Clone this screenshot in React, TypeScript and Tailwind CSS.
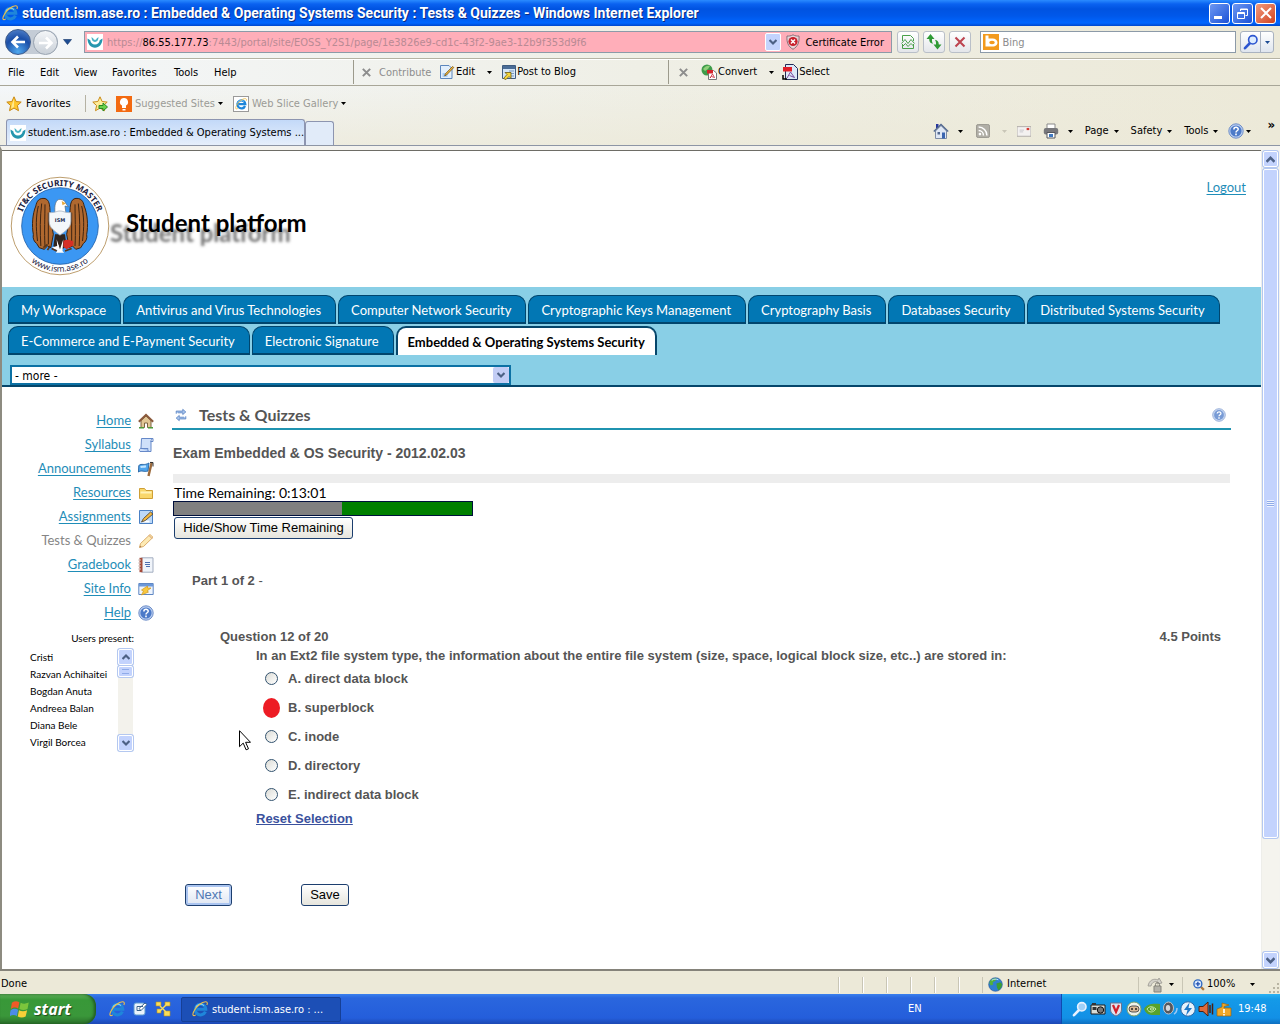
import React from "react";

type IconProps = { className?: string };

const ui = "font-['DejaVu_Sans_Condensed','Noto_Sans',sans-serif]";
const treb = "font-['Lato','Open_Sans',sans-serif]";

function Icon({ className = "size-4", children }: { className?: string; children: React.ReactNode }) {
  return (
    <svg viewBox="0 0 16 16" className={"shrink-0 " + className} fill="none" aria-hidden="true">
      {children}
    </svg>
  );
}

function Caret({ className = "text-black" }: IconProps) {
  return (
    <svg viewBox="0 0 5 3" className={"h-[3px] w-[5px] shrink-0 " + className} aria-hidden="true">
      <path d="M0 0h5L2.500 3z" fill="currentColor" />
    </svg>
  );
}

function Chevron({ up = false, className = "size-2" }: { up?: boolean; className?: string }) {
  return (
    <svg viewBox="0 0 8 8" className={className} fill="none" stroke="#4d6185" strokeWidth="2.200" aria-hidden="true">
      <path d={up ? "M0.500 6L4 2.500 7.500 6" : "M0.500 2L4 5.500 7.500 2"} />
    </svg>
  );
}

function IeLogo({ className }: IconProps) {
  return (
    <Icon className={className}>
      <path d="M13.400 10.600A5.300 5.300 0 1 1 13.800 8.300H5" stroke="#1f86da" strokeWidth="3" />
      <path d="M3.600 6.500A5.300 5.300 0 0 1 12 4.600" stroke="#86cff8" strokeWidth="1.100" />
      <path d="M3.800 13.900C1.300 15.800-.2 14 2 10 4.500 5.200 10 .6 13.800.8c2 .2 1.700 2 1 3.200" stroke="#f0c048" strokeWidth="1.100" />
    </Icon>
  );
}

function SiteMark({ className }: IconProps) {
  return (
    <Icon className={className}>
      <path d="M0 0h16v16H0z" fill="#fff" />
      <path d="M.5 4.500c0 5.500 3.200 9.200 7.500 9.200s7.500-3.700 7.500-9.200l-2.800 1.700C12.500 8.800 10.700 10.500 8 10.500S3.500 8.800 3.300 6.200z" fill="#2496ae" />
      <path d="M4.500 3c0 3.200 1.300 4.900 3.500 4.900s3.500-1.700 3.500-4.900L9.700 4.500 9 5.700H7L6.300 4.500z" fill="#48b3c4" />
    </Icon>
  );
}

function Star({ add = false }: { add?: boolean }) {
  return (
    <Icon>
      <path d="M8 .8l2.100 4.700 5.100.6-3.800 3.400 1.100 5.200L8 12.100l-4.500 2.600 1.100-5.200L.8 6.100l5.100-.6z" fill={add ? "#fff0a0" : "#ffc72e"} stroke="#c98a17" />
      <path d="M8 2.800v8.200l-3 1.700.8-3.600z" fill="#ffe88c" />
      {add && <path d="M7 9.500h4V7l4.500 4-4.500 4v-2.500H7z" fill="#6bd14b" stroke="#2b8a22" />}
    </Icon>
  );
}

function HelpMark({ className }: IconProps) {
  return (
    <Icon className={className}>
      <circle cx="8" cy="8" r="7.200" fill="#b9cdf0" stroke="#6f8fc8" />
      <circle cx="8" cy="8" r="5.600" fill="#4c7ac8" />
      <path d="M5.900 6.400C5.900 3.700 10.200 3.700 10.200 6.200 10.200 7.800 8 7.700 8 9.500" stroke="#fff" strokeWidth="1.500" />
      <path d="M7.200 10.600h1.600v1.600H7.200z" fill="#fff" />
    </Icon>
  );
}

function DocEdit({ className }: IconProps) {
  return (
    <Icon className={className}>
      <path d="M1.500 1.500h8.500l3 3v10H1.500z" fill="#e2effc" stroke="#5c86bd" />
      <path d="M3.500 9h5v4h-5z" fill="#a8cdf2" />
      <path d="M14.800 3.500L7.500 11l-1.800.9.600-2L13.500 2.500z" fill="#f0b83a" stroke="#7a5415" strokeWidth=".8" />
    </Icon>
  );
}

function Magnifier({ stroke = "#2c5fc9", lens = "#dcecff" }: { stroke?: string; lens?: string }) {
  return (
    <Icon>
      <path d="M7 9L2 14.200" stroke={stroke} strokeWidth="2.600" strokeLinecap="round" />
      <circle cx="9.800" cy="5.800" r="4.200" fill={lens} stroke={stroke} strokeWidth="1.600" />
    </Icon>
  );
}

function Globe({ className }: IconProps) {
  return (
    <Icon className={className}>
      <circle cx="8" cy="8" r="7.300" fill="#2f7fd0" stroke="#1c4f94" strokeWidth=".6" />
      <path d="M2 4.500C4 2 7 1.200 9 1.500L8 4 5 5.500 5.500 8 3 9 1.500 7z" fill="#52b13c" />
      <path d="M9 7l4-1.500 2 2c0 3-2 5.500-4 6.500L9.500 11z" fill="#3c9e34" />
      <path d="M4 3.500C6 2 9 2 11 3" stroke="#c8ecff" />
    </Icon>
  );
}

function TitleBar() {
  return (
    <header className="flex h-[26px] items-center bg-[linear-gradient(180deg,#2a8bff_0,#0a62f0_4px,#0053e1_9px,#0058ea_16px,#0066ff_23px,#0047cc_26px)] pr-1 pl-[2px]">
      <IeLogo className="size-4" />
      <h1 className="ml-1 flex-1 truncate pt-[1px] font-['Roboto',sans-serif] text-[14px] font-bold text-white [text-shadow:1px_1px_0_#0a2a80]">
        student.ism.ase.ro : Embedded &amp; Operating Systems Security : Tests &amp; Quizzes - Windows Internet Explorer
      </h1>
      <div className="flex gap-[2px]">
        <button aria-label="Minimize" className="flex size-[21px] items-end justify-start rounded-[3px] border border-white bg-linear-to-br from-[#6d97f2] to-[#1a4fd6] p-1">
          <span className="h-[3px] w-2 bg-white" />
        </button>
        <button aria-label="Restore" className="flex size-[21px] items-center justify-center rounded-[3px] border border-white bg-linear-to-br from-[#6d97f2] to-[#1a4fd6]">
          <svg viewBox="0 0 11 11" className="size-[11px]" fill="none" stroke="#fff" aria-hidden="true">
            <path d="M3.500 3V1h7v6.500H8.500" /><path d="M3 1.500h8" /><path d="M.5 4.500h7v6h-7zM.5 5.500h7" />
          </svg>
        </button>
        <button aria-label="Close" className="flex size-[21px] items-center justify-center rounded-[3px] border border-white bg-linear-to-br from-[#f09a7c] to-[#d0401a]">
          <svg viewBox="0 0 12 12" className="size-3" stroke="#fff" strokeWidth="2" aria-hidden="true"><path d="M1 1l10 10M11 1L1 11" /></svg>
        </button>
      </div>
    </header>
  );
}

const toolBtn = "flex size-[22px] items-center justify-center rounded-[3px] border border-[#b9bfc8] bg-linear-to-b from-white to-[#e4e6ea]";

function AddressBar() {
  return (
    <div className="flex h-8 items-center pr-[6px] pl-[5px]">
      <div className="flex h-6 items-center rounded-full bg-[#c4ccd6]">
        <button aria-label="Back" className="size-[26px] rounded-full border border-[#3c5a8c] bg-[radial-gradient(circle_at_50%_90%,#4fa8ee,#1c4fa8_55%,#5b8ad0)] p-1">
          <svg viewBox="0 0 16 16" className="size-4" fill="none" stroke="#fff" strokeWidth="2.600" aria-hidden="true"><path d="M15 8H3M8 2.500L2.500 8 8 13.500" /></svg>
        </button>
        <button aria-label="Forward" className="ml-[2px] size-[25px] rounded-full border border-[#98a3b0] bg-linear-to-b from-[#f4f6f8] to-[#c9d0d8] p-1">
          <svg viewBox="0 0 16 16" className="size-4" fill="none" stroke="#fff" strokeWidth="2.600" aria-hidden="true"><path d="M1 8h12M8 2.500L13.500 8 8 13.500" /></svg>
        </button>
      </div>
      <button aria-label="Recent pages" className="ml-[5px]">
        <svg viewBox="0 0 9 6" className="h-[6px] w-[9px]" aria-hidden="true"><path d="M.5.5h8L4.500 5.500z" fill="#1d4c93" stroke="#123468" strokeWidth=".6" /></svg>
      </button>
      <div className="ml-3 flex h-[22px] flex-[812] items-center border border-[#8c9aa8] bg-[#ffaeb9] pl-[2px]">
        <SiteMark className="size-4" />
        <p className={ui + " ml-1 flex-1 truncate pt-[2px] text-[11px] text-[#b98a94]"}>
          https://<span className="text-black">86.55.177.73</span>:7443/portal/site/EOSS_Y2S1/page/1e3826e9-cd1c-43f2-9ae3-12b9f353d9f6
        </p>
        <button aria-label="Show addresses" className="flex h-[18px] w-4 items-center justify-center rounded-[2px] border border-white bg-[#c3d3fd]"><Chevron /></button>
        <button className={ui + " ml-1 flex w-[106px] items-center gap-1 text-[11px] text-black"}>
          <Icon>
            <path d="M8 .8C10 2 12.500 2.200 14 2c.5 6-1 10.500-6 13.300C3 12.500 1.500 8 2 2c1.500.2 4 0 6-1.200z" fill="#e8d4d8" stroke="#8a7078" />
            <circle cx="8" cy="7.500" r="4.600" fill="#c8202c" /><path d="M6 5.500l4 4M10 5.500l-4 4" stroke="#fff" strokeWidth="1.500" />
          </Icon>
          <span className="pt-[2px] whitespace-nowrap">Certificate Error</span>
        </button>
      </div>
      <div className="mx-[5px] flex gap-1">
        <button aria-label="Compatibility View" className={toolBtn}>
          <Icon><path d="M2.500 7V1.500h8l3 3V7M2.500 10v4.500h11V10" stroke="#4aa04a" /><path d="M1.500 9.500L5 5.500l3 4 3-4 3.500 4M3 12l2.500-2.500 2.500 3 3-3 2.500 2.500" stroke="#4aa04a" /></Icon>
        </button>
        <button aria-label="Refresh" className={toolBtn}>
          <Icon><path d="M4.500 0L.5 5h2.700c0 3 1.300 4.500 4 4.800C6 8.500 5.900 7 6 5h2.500zM11.500 15.500l4-5h-2.700c0-3-1.300-4.500-4-4.800 1.200 1.300 1.300 2.800 1.200 4.800H7.500z" fill="#2f9a35" /></Icon>
        </button>
        <button aria-label="Stop" className={toolBtn}>
          <Icon className="size-3"><path d="M2 2l12 12M14 2L2 14" stroke="#bd4450" strokeWidth="2.800" /></Icon>
        </button>
      </div>
      <form className="ml-1 flex h-[22px] flex-[254] items-center border border-[#8c9aa8] bg-white pl-[2px]">
        <Icon className="size-4"><path d="M0 0h16v16H0z" fill="#f39a1d" /><path d="M2.500 1.500v11h7c3.500 0 5-2 5-4s-2-4-5-4H5.500v-3z" fill="#fff" /><ellipse cx="9" cy="8.500" rx="2.800" ry="1.800" fill="#f39a1d" /></Icon>
        <input aria-label="Search" placeholder="Bing" className={ui + " ml-[3px] min-w-0 flex-1 bg-transparent pt-[2px] text-[11px] outline-none placeholder:text-[#8c8c8c]"} />
      </form>
      <div className="ml-1 flex h-[22px] rounded-[3px] border border-[#a9b2c0] bg-linear-to-b from-white to-[#dfe5ee]">
        <button aria-label="Search" className="flex w-5 items-center justify-center border-r border-[#a9b2c0]"><Magnifier stroke="#2c55d0" /></button>
        <button aria-label="Search options" className="flex w-3 items-center justify-center"><Caret className="text-[#1d4c93]" /></button>
      </div>
    </div>
  );
}

function MenuBar() {
  const grayX = <Icon className="size-[9px]"><path d="M1.500 1.500l13 13M14.500 1.500l-13 13" stroke="#8d8d8d" strokeWidth="3.600" /></Icon>;
  return (
    <div className={ui + " flex h-7 items-center border-y border-t-[#b5b2a3] border-b-[#a8a698] text-[11px] text-black shadow-[inset_0_1px_0_#fff]"}>
      <nav aria-label="Menu" className="flex w-[353px] items-center pt-[3px] pl-2">
        <button className="w-8 text-left">File</button>
        <button className="w-[34px] text-left">Edit</button>
        <button className="w-[38px] text-left">View</button>
        <button className="w-[62px] text-left">Favorites</button>
        <button className="w-10 text-left">Tools</button>
        <button>Help</button>
      </nav>
      <div className="flex h-6 w-[315px] items-center border-l border-[#9c9a8c] pl-2">
        {grayX}
        <span className="ml-2 w-[60px] pt-[2px] text-[#8d8d8d]">Contribute</span>
        <button className="flex items-center gap-[1px]"><DocEdit className="size-4" /><span className="pt-[1px]">Edit</span></button>
        <span className="w-3" /><Caret /><span className="w-[9px]" />
        <button className="flex items-center">
          <Icon><path d="M1.500 1.500h13v13h-13z" fill="#d4e6f8" stroke="#3f5c80" /><path d="M2 2h12v3H2z" fill="#4a6c96" /><path d="M8 7h5M8 9.500h5M9 12h4" stroke="#7b9bc0" /><path d="M2.500 14.500l3.500-4-2-2h6v6l-2-2-3 3z" fill="#f5d63a" stroke="#6c5a10" strokeWidth=".8" /></Icon>
          <span className="pt-[1px]">Post to Blog</span>
        </button>
      </div>
      <div className="flex h-6 items-center border-l border-[#9c9a8c] pl-[10px]">
        {grayX}
        <button className="ml-[13px] flex items-center gap-[1px]">
          <Icon><circle cx="6" cy="6" r="5.500" fill="#3f9b4a" /><path d="M2 5c2-3 5-4 7-3L7 5 4 7z" fill="#8fd07a" /><path d="M7.500 6.500h5l3 2.500v6.500h-8z" fill="#fff" stroke="#777" /><path d="M6 6h6v3.500H6z" fill="#d4232a" /><path d="M9 14l2.500-4 2 3.500-3-1z" stroke="#c23" strokeWidth=".8" /></Icon>
          <span className="pt-[1px]">Convert</span>
        </button>
        <span className="w-[12px]" /><Caret /><span className="w-2" />
        <button className="flex items-center gap-[1px]">
          <Icon><path d="M3.500.5h8l4 4v11h-12z" fill="#dce8f8" stroke="#222c58" /><path d="M1 3h9v4.500H1z" fill="#e0202a" /><path d="M5 14l3.500-6 4 5.500-5-2" stroke="#7a4a9c" /><path d="M1 11v4h4" stroke="#000" strokeWidth="1.500" /></Icon>
          <span className="pt-[1px]">Select</span>
        </button>
      </div>
    </div>
  );
}

function FavoritesBar() {
  return (
    <div className={ui + " flex h-[31px] items-center pt-1 pl-[6px] text-[11px]"}>
      <button className="flex w-[79px] items-center gap-1 text-black"><Star /><span className="pt-[1px]">Favorites</span></button>
      <div className="flex items-center border-l border-[#b5b2a3] pl-[6px] text-[#9b9b96]">
        <button aria-label="Add to favorites"><Star add /></button>
        <button className="ml-2 flex items-center gap-[3px]">
          <Icon className="size-4"><path d="M0 0h16v16H0z" fill="#f36a11" /><path d="M8 2a4 4 0 0 0-2 7.500V12h4V9.500A4 4 0 0 0 8 2zM6.500 13h3v1.500h-3z" fill="#fff" /></Icon>
          <span className="pt-[1px]">Suggested Sites</span> <Caret />
        </button>
        <button className="ml-[10px] flex items-center gap-[3px]">
          <span className="flex size-4 items-center justify-center border border-[#9a9a9a] bg-white"><IeLogo className="size-3" /></span>
          <span className="pt-[1px]">Web Slice Gallery</span> <Caret />
        </button>
      </div>
    </div>
  );
}

function TabRow() {
  return (
    <div className="flex h-[29px] items-end border-b border-[#8d95a5] pl-[6px]">
      <div className="flex h-[26px] w-[299px] items-center rounded-t-[3px] border border-b-0 border-[#8d95b0] bg-linear-to-b from-[#c3d9f8] to-[#e6effb] pl-[3px]">
        <SiteMark className="size-4" />
        <span className={ui + " ml-[2px] pt-[2px] text-[11px] whitespace-nowrap text-black"}>student.ism.ase.ro : Embedded &amp; Operating Systems ...</span>
      </div>
      <button aria-label="New tab" className="h-6 w-[29px] rounded-t-[3px] border border-b-0 border-[#8d95b0] bg-[#e1ebf9]" />
      <div className={ui + " flex flex-1 items-center justify-end self-stretch pr-[5px] text-[11px] text-black"}>
        <button aria-label="Home" className="flex items-center gap-[9px]">
          <Icon><path d="M3 1h2.500v4H3z" fill="#27379c" /><path d="M2.500 8v7.500h11V8L8 2.500z" fill="#dfe7f5" stroke="#7d8ba5" /><path d="M.8 8.500L8 1.500l7.200 7" stroke="#52688f" strokeWidth="1.300" /><path d="M9 9.500h3v6H9z" fill="#3a64b0" /><path d="M4.500 9h2.500v2.500H4.500z" fill="#52688f" /></Icon>
          <Caret />
        </button>
        <button aria-label="Feeds" className="ml-[13px] flex items-center gap-3">
          <Icon className="size-[14px]"><rect x=".5" y=".5" width="15" height="15" rx="2" fill="#b0aea6" stroke="#93918a" /><circle cx="4.500" cy="11.500" r="1.500" fill="#fff" /><path d="M3 7.500a5.500 5.500 0 0 1 5.500 5.500M3 3.500A9.500 9.500 0 0 1 12.500 13" stroke="#fff" strokeWidth="1.700" /></Icon>
          <Caret className="text-[#c9c6b8]" />
        </button>
        <button aria-label="Read mail" className="ml-[10px]">
          <Icon className="h-4 w-[14px]"><path d="M0 3h16v11H0z" fill="#f3f1f0" stroke="#aaa6a2" /><path d="M3 7h5M3 9h4" stroke="#c5c5cc" /><path d="M11 4.500h3v2.500h-3z" fill="#d63a32" /></Icon>
        </button>
        <button aria-label="Print" className="ml-3 flex items-center gap-[9px]">
          <Icon><path d="M4 1h8v5H4z" fill="#fff" stroke="#8a8a8a" /><rect x=".8" y="5" width="14.400" height="6.500" rx="2" fill="#77777b" /><path d="M4 9.500h8v5.500H4z" fill="#fff" stroke="#55565c" /><path d="M6 11h4v3H6z" fill="#3f78c0" /></Icon>
          <Caret />
        </button>
        <button className="ml-3 flex items-center gap-[5px]">Page <Caret /></button>
        <button className="ml-3 flex items-center gap-[5px]">Safety <Caret /></button>
        <button className="ml-3 flex items-center gap-[5px]">Tools <Caret /></button>
        <button aria-label="Help" className="ml-[10px] flex items-center gap-[2px]"><HelpMark /><Caret /></button>
        <button aria-label="More commands" className="mb-[14px] ml-4 text-[13px] leading-none font-bold">»</button>
      </div>
    </div>
  );
}

function SchoolSeal() {
  const wing =
    "M49 54C47 44 50 29 42 27c-7-1-10 3-11 9-4 9-5 24-3 34-1 5 1 9 4 11l3 5 6 2 4-4 4 2 3-16z";
  return (
    <svg viewBox="0 0 120 120" className="size-[100px] shrink-0" role="img" aria-label="IT&C Security Master seal">
      <defs>
        <path id="sealTop" d="M12 60a48 48 0 0 1 96 0" />
        <path id="sealBottom" d="M5 60a55 55 0 0 0 110 0" />
      </defs>
      <circle cx="60" cy="60" r="58.500" fill="#fff" stroke="#b08a50" />
      <circle cx="60" cy="60" r="46" fill="#3b97f3" stroke="#1f5fa8" />
      <text className="font-['Noto_Sans',sans-serif] text-[10px] font-bold" fill="#1a2040" textAnchor="middle">
        <textPath href="#sealTop" startOffset="50%">IT&amp;C SECURITY MASTER</textPath>
      </text>
      <text className="font-['Noto_Sans',sans-serif] text-[10px]" fill="#1a2040" textAnchor="middle">
        <textPath href="#sealBottom" startOffset="50%">www.ism.ase.ro</textPath>
      </text>
      <g fill="#b0682f" stroke="#3d2412" strokeWidth="1.200">
        <path d={wing} />
        <path d={wing} transform="translate(120 0) scale(-1 1)" />
      </g>
      <g stroke="#3d2412" strokeWidth="1.200" fill="none">
        <path d="M34 36c-3 12-3 26-1 42M38 33c-2 16-2 34-1 51M42 34c0 14-1 34 0 50M46 44v38" />
        <path d="M86 36c3 12 3 26 1 42M82 33c2 16 2 34 1 51M78 34c0 14 1 34 0 50M74 44v38" />
      </g>
      <path d="M54 44c-1-9 1-16 6-16 4 0 6 2 7 5l3 4-4-1 1 8z" fill="#fff" stroke="#567" strokeWidth=".8" />
      <path d="M62 30l5 3-4 2z" fill="#e8a83a" />
      <path d="M54 70h12l2 14-8 6-8-6z" fill="#30251e" />
      <path d="M47 44c8 0 9-2 13-2s5 2 13 2v10c0 9-7 12-13 17-6-5-13-8-13-17z" fill="#f4f7fa" stroke="#a9b4c2" />
      <text x="60" y="55" textAnchor="middle" className="font-['DejaVu_Sans',sans-serif] text-[6px] font-bold" fill="#1a2a50">ISM</text>
      <path d="M56 76l4 12 4-12-1 14 2 2H55l2-3zM50 86l9-3-2 6z" fill="#fff" />
      <path d="M64 78c4-3 8-1 12 0v5l-8 5-4-3z" fill="#d62f26" />
      <path d="M45 82l-5 4M48 84l-3 5M50 87l6 3M66 90l8-3" stroke="#5a3618" strokeWidth="2" />
    </svg>
  );
}

function SiteTab({ label }: { label: string }) {
  return (
    <li>
      <a href="#" className="flex h-[29px] items-center rounded-t-[10px] border border-b-2 border-[#00466e] bg-[#0277b4] pt-1 pr-[14px] pl-3 whitespace-nowrap text-white">
        {label}
      </a>
    </li>
  );
}

function SiteNav() {
  const rowOne = ["My Workspace", "Antivirus and Virus Technologies", "Computer Network Security", "Cryptographic Keys Management", "Cryptography Basis", "Databases Security", "Distributed Systems Security"];
  return (
    <div className="flex flex-col border-b-2 border-[#05466b] bg-[#89cfe6] pt-2">
      <nav aria-label="Sites" className={treb + " flex flex-col gap-[2px] pl-[6px] text-[13px]"}>
        <ul className="flex gap-[2px]">{rowOne.map((t) => <SiteTab key={t} label={t} />)}</ul>
        <ul className="flex gap-[2px]">
          <SiteTab label="E-Commerce and E-Payment Security" />
          <SiteTab label="Electronic Signature" />
          <li>
            <a href="#" aria-current="page" className="flex h-[29px] items-center rounded-t-[10px] border-2 border-b-0 border-[#05466b] bg-white px-[10px] pt-[2px] font-bold whitespace-nowrap text-black">
              Embedded &amp; Operating Systems Security
            </a>
          </li>
        </ul>
      </nav>
      <div className="relative mt-[10px] ml-2 h-5 w-[501px] border-2 border-[#0c71a4] bg-white">
        <select aria-label="More sites" className={ui + " block h-4 w-full appearance-none bg-white pt-[2px] pl-[3px] text-[12px] leading-[14px] text-black"}>
          <option>- more -</option>
        </select>
        <span className="pointer-events-none absolute top-0 right-0 flex size-4 items-center justify-center rounded-[2px] bg-[#c3cdf5]"><Chevron /></span>
      </div>
    </div>
  );
}

const homeIcon = <Icon><path d="M3 7.500v7h3.500V10h3v4.500H13v-7L8 3z" fill="#e2c795" stroke="#7d6541" /><path d="M.8 8.800L8 2l7.200 6.800" stroke="#8b5a3c" strokeWidth="2" /><path d="M1 14.800h5M10 14.800h5" stroke="#4d9a3a" strokeWidth="1.600" /></Icon>;
const syllabusIcon = <Icon><path d="M3.500 1.500h11.500c-1.500.5-2 1.500-2 3v10H2c-1.500-1.500 0-3 1-3.500z" fill="#cfe0fa" stroke="#6588c8" /><path d="M2.500 11.500h7.500c-.5 1.500 0 2.500 1 3" fill="#a9c4f0" stroke="#6588c8" /><path d="M12.500 4.500h2.500v-3" stroke="#6588c8" /></Icon>;
const announceIcon = <Icon><path d="M.8 4.500C4 2 6 5 11 2L10 10C6 11.500 4 8.500.5 11z" fill="#4fa4ec" stroke="#2c6aa8" /><path d="M2.500 6c2-.5 3 0 5.500-.8" stroke="#c4e6ff" strokeWidth="2" /><path d="M13.800 1l-3.300 14" stroke="#9b6a3c" strokeWidth="2.400" /><path d="M12 1.500h3v4" stroke="#333" /></Icon>;
const resourceIcon = <Icon><path d="M1.500 13.500v-10h5l1.500 2h6.500v8z" fill="#f9d76b" stroke="#cf9f35" /><path d="M2.500 7.500h11" stroke="#fff2b8" strokeWidth="2" /></Icon>;
const assignIcon = <Icon><path d="M1.500 1.500h13v13h-13z" fill="#bcd8f7" stroke="#4a80c4" /><path d="M3.500 12.500h8" stroke="#fff" strokeWidth="2" /><path d="M12.500 3L5.500 9.500 3.500 13l3.800-1.500L15 5z" fill="#f3b73b" stroke="#5e5546" /></Icon>;
const pencilIcon = <Icon><path d="M1.500 14.500l1-4L12 1.500l3 2.800L5.500 13.500z" fill="#fdeab4" stroke="#dcae6c" /><path d="M11 2.500l3 3" stroke="#d79d72" /><path d="M1.500 14.500l.6-2 1.400 1.400z" fill="#a87b4c" /></Icon>;
const gradeIcon = <Icon><path d="M3.500.8H15v14.400H3.500z" fill="#f0f4fa" stroke="#a3adc0" /><path d="M1.500.8h3v14.400h-3z" fill="#a34b3a" /><path d="M0 3h3M0 6h3M0 9h3M0 12h3" stroke="#d8cac4" /><path d="M7 5.500h5M7 7.500h5M8 9.500h4" stroke="#4c6fb0" /></Icon>;
const infoIcon = <Icon><path d="M.8 2.500h14.400v11H.8z" fill="#eef4fd" stroke="#5f87c4" /><path d="M1 3h14v2.500H1z" fill="#6c98d8" /><path d="M9.500 5L3.500 9l2 1-2 4 7-3-1.500-1L13 7h-3.500z" fill="#fac83c" stroke="#cf9820" strokeWidth=".7" /></Icon>;

const tools: { label: string; icon: React.ReactNode; current?: boolean }[] = [
  { label: "Home", icon: homeIcon },
  { label: "Syllabus", icon: syllabusIcon },
  { label: "Announcements", icon: announceIcon },
  { label: "Resources", icon: resourceIcon },
  { label: "Assignments", icon: assignIcon },
  { label: "Tests & Quizzes", icon: pencilIcon, current: true },
  { label: "Gradebook", icon: gradeIcon },
  { label: "Site Info", icon: infoIcon },
  { label: "Help", icon: <HelpMark /> },
];

const users = ["Cristi", "Razvan Achihaitei", "Bogdan Anuta", "Andreea Balan", "Diana Bele", "Virgil Borcea"];

const scrollBtn = "flex items-center justify-center rounded-[2px] border border-white bg-[#c3d3fd] shadow-[0_0_0_1px_#b4c8f0]";

function Sidebar() {
  return (
    <aside className={treb + " w-[170px] shrink-0 pt-[22px]"}>
      <nav aria-label="Tools">
        <ul className="pr-[18px] text-[13px]">
          {tools.map((t) => (
            <li key={t.label} className="flex h-6 items-center justify-end gap-[7px]">
              {t.current ? (
                <span className="text-[#858585]">{t.label}</span>
              ) : (
                <a href="#" className="text-[#1f8db8] underline underline-offset-2">{t.label}</a>
              )}
              {t.icon}
            </li>
          ))}
        </ul>
      </nav>
      <h2 className="mt-[5px] pr-[38px] text-right text-[10px] leading-4 text-black">Users present:</h2>
      <div className="mt-[3px] mr-[39px] ml-7 flex">
        <ul className="flex-1 text-[10px] leading-[17px] whitespace-nowrap text-black">
          {users.map((u) => <li key={u}>{u}</li>)}
        </ul>
        <div className="flex w-[15px] flex-col justify-between bg-[#f3f2ec]">
          <div className="flex flex-col gap-[1px]">
            <button aria-label="Scroll users up" className={scrollBtn + " h-4"}><Chevron up /></button>
            <span className={scrollBtn + " h-[11px]"}><span className="h-[5px] w-[7px] border-y border-[#8fabe8]" /></span>
          </div>
          <button aria-label="Scroll users down" className={scrollBtn + " h-4"}><Chevron /></button>
        </div>
      </div>
    </aside>
  );
}

const xpButton = "h-[22px] rounded-[3px] border border-[#1c3e6e] bg-linear-to-b from-white to-[#e6e5dd] text-[13px] text-black";

function Quiz() {
  const options = ["A. direct data block", "B. superblock", "C. inode", "D. directory", "E. indirect data block"];
  return (
    <main className="flex-1 pt-[15px] pr-[30px] font-['Liberation_Sans',Arial,sans-serif] text-[13px] text-[#555]">
      <div className="flex h-7 items-center border-b-2 border-[#1f93b0] pr-[5px] pl-[2px]">
        <button aria-label="Reload tool">
          <Icon className="size-[14px]"><path d="M2.500 6.500V3.500H10V1.500l3.500 3-3.500 3v-2H4.500M13.500 9.500v3H6v2L2.500 11.500 6 8.500v2h5.500" fill="#a8c4ec" stroke="#5580c0" strokeWidth=".9" /></Icon>
        </button>
        <h2 className={treb + " ml-[11px] flex-1 text-[16px] leading-5 font-bold"}>Tests &amp; Quizzes</h2>
        <button aria-label="Help with this tool"><span className="block opacity-75"><HelpMark className="size-[14px]" /></span></button>
      </div>
      <h3 className="mt-[14px] pl-[1px] text-[14px] leading-[18px] font-bold">Exam Embedded &amp; OS Security - 2012.02.03</h3>
      <div className="mt-3 mr-[1px] ml-[1px] h-[9px] bg-[#ededed]" />
      <p className={treb + " mt-[1px] pl-[2px] text-[14px] leading-[17px] text-black"}>Time Remaining: 0:13:01</p>
      <div role="progressbar" aria-label="Time used" aria-valuenow={56} className="ml-[1px] flex h-[15px] w-[300px] border border-[#00103c] bg-[#008000]">
        <div className="bg-[#808080]" style={{ width: "56.5%" }} />
      </div>
      <button className={xpButton + " mt-[1px] ml-[2px] block w-[179px]"}>Hide/Show Time Remaining</button>
      <h4 className="mt-[33px] pl-5 leading-[18px] font-bold">Part 1 of 2 <span className="font-normal">-</span></h4>
      <section className="mt-[37px] mr-[10px] ml-12">
        <div className="flex justify-between leading-[19px] font-bold">
          <h5>Question 12 of 20</h5>
          <span>4.5 Points</span>
        </div>
        <fieldset className="relative pl-9 font-bold">
          <legend className="pt-[1px] leading-[17px]">In an Ext2 file system type, the information about the entire file system (size, space, logical block size, etc..) are stored in:</legend>
          {options.map((o, i) => (
            <label key={o} className="flex h-[29px] items-center">
              <span className="flex w-8 justify-center pr-[2px]">
                <input
                  type="radio"
                  name="answer"
                  defaultChecked={i === 1}
                  className="size-[13px] appearance-none rounded-[50%] border border-[#33536f] bg-linear-to-br from-[#dcdcd6] to-white checked:h-5 checked:w-[17px] checked:border-0 checked:bg-[#ed1c24] checked:bg-none"
                />
              </span>
              {o}
            </label>
          ))}
          <a href="#" className="block w-fit leading-[19px] text-[#3a519d] underline">Reset Selection</a>
          <svg viewBox="0 0 12 21" className="absolute top-[66px] left-[19px] h-[21px] w-3" aria-hidden="true">
            <path d="M.5.700v16l3.700-3.600 2.900 6.700 2.400-1-2.900-6.500h4.900z" fill="#fff" stroke="#000" />
          </svg>
        </fieldset>
      </section>
      <div className="mt-14 flex gap-[69px] pl-[13px]">
        <button className="h-[22px] w-[47px] rounded-[3px] border border-[#1c3e6e] bg-linear-to-b from-white to-[#dfe6f2] text-[13px] text-[#4f78b4] shadow-[inset_0_0_0_2px_#aac4f0]">Next</button>
        <button className={xpButton + " w-12"}>Save</button>
      </div>
    </main>
  );
}

function PageScrollbar() {
  return (
    <div className="flex w-[18px] shrink-0 flex-col border-l border-[#eeeeea] bg-[#f5f4ee] p-[1px]">
      <button aria-label="Scroll up" className={scrollBtn + " h-4"}><Chevron up className="size-[9px]" /></button>
      <div className={scrollBtn + " mt-[2px] flex-[670]"}><span className="h-[7px] w-[7px] bg-[repeating-linear-gradient(180deg,#eef3ff_0,#eef3ff_1px,#8fabe8_1px,#8fabe8_2px)]" /></div>
      <div className="flex-[114]" />
      <button aria-label="Scroll down" className={scrollBtn + " h-4"}><Chevron className="size-[9px]" /></button>
    </div>
  );
}

function StatusBar() {
  return (
    <footer className={ui + " flex h-[25px] items-center border-t-2 border-[#85837a] bg-[#ece9d8] pt-1 text-[11px] text-black"}>
      <span className="flex-1 pl-[1px]">Done</span>
      {[0, 1, 2, 3, 4, 5].map((n) => <span key={n} className="h-4 w-6 border-l border-[#c9c6b5] shadow-[inset_1px_0_0_#fff]" />)}
      <span className="flex h-4 w-[156px] items-center gap-1 border-l border-[#c9c6b5] pl-[5px]"><Globe className="size-[15px]" />Internet</span>
      <button aria-label="Protected mode" className="flex h-4 w-11 items-center gap-[6px] border-l border-[#c9c6b5] pl-2">
        <Icon><path d="M1 9C2 3 7 1 11 3l1-2 3 5-5 1 1-2C8 4 5 5 4 9z" fill="#d4d2ca" stroke="#999790" strokeWidth=".8" /><path d="M7 9h7v6H7z" fill="#b4b2aa" stroke="#85837a" /><path d="M8.500 9V7.500a2 2 0 0 1 4 0V9" stroke="#85837a" /></Icon>
        <Caret />
      </button>
      <button className="flex h-4 w-[87px] items-center border-l border-[#c9c6b5] pl-[10px]">
        <Icon className="size-3"><path d="M9 9l5.500 5.500" stroke="#b07a3c" strokeWidth="3" /><circle cx="6.500" cy="6.500" r="5.300" fill="#dcebff" stroke="#2e68c0" strokeWidth="1.800" /><path d="M6.500 3.500v6M3.500 6.500h6" stroke="#2050b0" strokeWidth="1.800" /></Icon>
        <span className="mr-[15px] ml-[2px]">100%</span><Caret />
      </button>
      <svg viewBox="0 0 11 11" className="size-[11px] self-end" aria-hidden="true">
        <path d="M8 0h2v2H8zM4 4h2v2H4zM8 4h2v2H8zM0 8h2v2H0zM4 8h2v2H4zM8 8h2v2H8z" fill="#b8b4a2" />
      </svg>
    </footer>
  );
}

function TrayIcons() {
  return (
    <>
      <Magnifier stroke="#e8f2ff" lens="#9fd0f8" />
      <Icon><path d="M1 4h14v9H1z" fill="#d9dcd6" stroke="#1c1c1c" /><path d="M2 4V2h4v2" fill="#333" /><circle cx="10.500" cy="9" r="3.200" fill="#777" stroke="#111" /><path d="M2.500 6h4v3h-4z" fill="#333" /></Icon>
      <Icon><path d="M2.500 2h11v7c0 3-3 5-5.500 6-2.500-1-5.500-3-5.500-6z" fill="#dfe3ee" stroke="#6b7391" /><path d="M5 4l3 7 3-7" stroke="#d3202a" strokeWidth="2.200" /></Icon>
      <Icon><circle cx="8" cy="8" r="7" fill="#eef2ea" stroke="#7aa06a" /><rect x="3" y="5" width="10" height="6" rx="3" fill="#d9b894" stroke="#555" /><circle cx="6" cy="8" r="1" fill="#222" /><circle cx="10" cy="8" r="1" fill="#222" /></Icon>
      <Icon><path d="M0 8c3-5 8-5.500 16-5v11H8C4 14 1 11 0 8z" fill="#58a22c" /><path d="M3 8c2-3 6-3 9 0-3 4-7 4-9 0zM6 8c1-1.500 3-1.500 4 0-1 1.500-3 1.500-4 0z" stroke="#c9e8a8" /></Icon>
      <Icon><ellipse cx="6.500" cy="7" rx="5" ry="6" fill="#55585e" stroke="#c0c4ca" /><ellipse cx="6" cy="7" rx="2.200" ry="3" fill="#d5d8dc" /><path d="M12 13c2-1 3-3 3-6" stroke="#9ec9f4" strokeWidth="1.500" /></Icon>
      <Icon><circle cx="8" cy="8" r="7.200" fill="#e6f1fb" stroke="#2d6aa8" /><path d="M9.500 1.500L4 9h3.500L6 14.500 12 7H8.500z" fill="#1f78c8" /></Icon>
      <Icon><path d="M1 5.500h4l5-4.500v14l-5-4.500H1z" fill="#dd6a3c" stroke="#4c2010" /><path d="M12 4v8M14.500 2.500v11" stroke="#4c2010" strokeWidth="1.500" /></Icon>
      <Icon><path d="M1 15V8l5-2V2l7 2-5 1.500V7h7v8z" fill="#f0a828" stroke="#9a6410" strokeWidth=".7" /><path d="M8 8v4M8 13v1.500" stroke="#fff" strokeWidth="1.600" /></Icon>
    </>
  );
}

function Taskbar() {
  return (
    <div className={ui + " flex h-[30px] items-center bg-[linear-gradient(180deg,#3a80ee_0,#2a66de_4px,#245edb_24px,#1c48b4_30px)] text-[11px] text-white"}>
      <button className="flex h-full w-24 items-center gap-1 rounded-r-xl bg-[linear-gradient(180deg,#5fae5a_0,#389838_6px,#3a973a_22px,#2a6e2a_30px)] pl-[10px] shadow-[inset_-2px_0_3px_#215a21]">
        <Icon className="size-5"><path d="M1.500 3C3.500 1.500 5.500 1.500 7.500 2.500L6.500 7.500C4.800 6.500 2.800 6.500.7 8z" fill="#ee5a28" /><path d="M8.500 3c2 1 4 1 6.500-.2L14 8c-2.200 1-4.500 1-6.500 0z" fill="#7cc53c" /><path d="M.5 9c2-1.500 4-1.500 6-.5l-1 5c-2-1-4-1-6 .4z" fill="#4c8ce8" /><path d="M7.200 9c2 1 4.300 1 6.500 0l-1.200 5c-2 1-4.300 1-6.300 0z" fill="#f8cf38" /></Icon>
        <span className="font-['Open_Sans',sans-serif] text-[16px] font-bold italic [text-shadow:1px_1px_1px_#1c4a1c]">start</span>
      </button>
      <div className="flex gap-[7px] pl-[13px]">
        <button aria-label="Internet Explorer"><IeLogo className="size-4" /></button>
        <button aria-label="Show desktop"><Icon><rect x="2" y="2" width="11" height="12" rx="2" fill="#e9f3fc" stroke="#5c9ad0" /><path d="M5 9.500V5.500h6M5 9.500h4M7 7.500L13 2l2 1.500-6 6z" fill="#fff" stroke="#38628c" /></Icon></button>
        <button aria-label="Desktop manager"><Icon><path d="M1 1h5v4H1zM10 1h5v4h-5zM9 10h6v5H9zM2 8h4v4H2z" fill="#f8dc5a" stroke="#b8901c" strokeWidth=".6" /><path d="M5 5l6 6M11 4L5 10" stroke="#f8dc5a" strokeWidth="1.400" /></Icon></button>
      </div>
      <button className="ml-[10px] flex h-[25px] w-40 items-center gap-1 rounded-[2px] border border-[#163f96] bg-[#1c4fb6] pl-[10px]">
        <IeLogo className="size-4" /><span className="pt-[2px]">student.ism.ase.ro : ...</span>
      </button>
      <span className="flex-1" />
      <span className="w-[153px] pt-[1px]">EN</span>
      <div className="flex h-full w-[219px] items-center gap-[2px] border-l border-[#0f4bb0] bg-[linear-gradient(180deg,#28b2f4_0,#149ae8_5px,#1290e6_24px,#0f6fc0_30px)] pl-[10px]">
        <TrayIcons />
        <span className="ml-1 pt-[1px]">19:48</span>
      </div>
    </div>
  );
}

export default function App() {
  return (
    <div className="flex min-h-screen flex-col bg-[#ece9d8]">
      <TitleBar />
      <div className="bg-linear-to-r from-[#f4f7fa] via-[#efefe6] to-[#ece9d8]">
        <AddressBar />
        <MenuBar />
        <div className="bg-linear-to-b from-transparent to-[#ece9d8]/70">
          <FavoritesBar />
          <TabRow />
        </div>
      </div>
      <div className="flex flex-1 border-t-4 border-r border-l-2 border-[#f4f3ee] border-l-[#8d8b80]">
        <div className="flex min-w-0 flex-1 flex-col border-t border-[#6e6d66] bg-white">
          <div className="flex h-[136px] items-start justify-between pr-[15px] pl-2">
            <div className="flex items-center pt-[25px]">
              <SchoolSeal />
              <span className="ml-4 pb-[6px] font-['Lato',sans-serif] text-[24px] leading-8 font-bold text-black [text-shadow:-16px_10px_3px_rgba(0,0,0,0.55)]">Student platform</span>
            </div>
            <a href="#" className={treb + " mt-[26px] text-[13px] leading-5 text-[#1f8db8] underline underline-offset-2"}>Logout</a>
          </div>
          <SiteNav />
          <div className="flex">
            <Sidebar />
            <Quiz />
          </div>
        </div>
        <PageScrollbar />
      </div>
      <StatusBar />
      <Taskbar />
    </div>
  );
}
